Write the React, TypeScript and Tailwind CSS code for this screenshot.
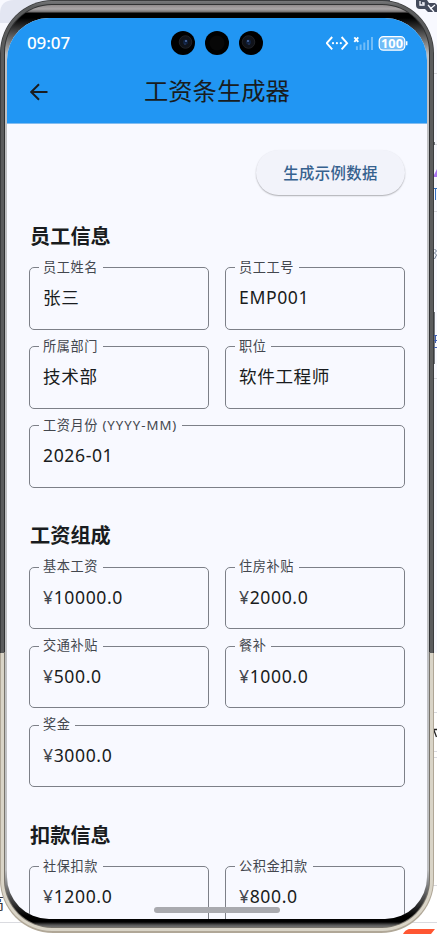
import React from "react";

function Field({ label, value }: { label: string; value: string }) {
  const money = value.startsWith("¥");
  const [name, hint] = label.split(" ");
  return (
    <fieldset className="-mt-[9px] h-[71px] min-w-0 flex-1 rounded-[5px] border border-[#7d8088] pl-[13px]">
      <legend className="-ml-[4px] h-[18px] whitespace-nowrap pl-[4px] pr-[5px] text-[13.2px] leading-[17px] tracking-[0.55px] text-[#43474e]">
        {name}
        {hint && <span className="tracking-[1px]"> {hint}</span>}
      </legend>
      <div className="pt-[8.5px] text-[17.6px] leading-[24px] tracking-[0.6px] text-[#191c20]">
        {money && <span className="text-[#43474e]">¥</span>}
        {money ? value.slice(1) : value}
      </div>
    </fieldset>
  );
}

function Section({ title, rows }: { title: string; rows: [string, string][][] }) {
  return (
    <section>
      <h2 className="mb-[17.3px] h-[30px] pl-px text-[20.2px] font-bold leading-[31px] text-[#191c20]">{title}</h2>
      <div className="flex flex-col gap-[17px]">
        {rows.map((row, i) => (
          <div key={i} className="flex gap-4">
            {row.map(([label, value]) => (
              <Field key={label} label={label} value={value} />
            ))}
          </div>
        ))}
      </div>
    </section>
  );
}

function Camera({ lens, flip }: { lens?: boolean; flip?: boolean }) {
  return (
    <svg width="24" height="24" viewBox="0 0 24 24" className={flip ? "-scale-x-100" : ""}>
      <circle cx="12" cy="12" r="12" fill="#000" />
      {lens ? (
        <>
          <circle cx="14.5" cy="11" r="6.3" fill="#10131a" stroke="#24262b" strokeWidth="0.8" />
          <circle cx="14.5" cy="11" r="2.6" fill="#11203c" />
          <circle cx="15" cy="10" r="0.9" fill="#5878b5" />
          <circle cx="14" cy="13" r="0.6" fill="#3d5fa5" />
        </>
      ) : (
        <circle cx="12" cy="12" r="7.5" fill="#070707" />
      )}
    </svg>
  );
}

function StatusBar() {
  return (
    <div className="flex h-[50px] items-center pl-[20px] pr-[19px]">
      <span className="w-[144px] pb-[2px] text-[17px] font-medium leading-none tracking-[-0.1px] text-white">09:07</span>
      <div className="flex w-[93px] gap-[10px]">
        <Camera lens />
        <Camera />
        <Camera lens flip />
      </div>
      <svg className="ml-auto" width="82" height="18" viewBox="0 0 82 18" fill="none">
        <g stroke="#fff" strokeWidth="1.9">
          <path d="M6.2 3 .7 9.2l5.500 6.200M15.600 3l5.500 6.200-5.500 6.200" />
        </g>
        <g fill="#fff">
          <circle cx="7" cy="9.2" r="1.1" />
          <circle cx="10.9" cy="9.2" r="1.1" />
          <circle cx="14.8" cy="9.2" r="1.1" />
        </g>
        <path d="m28.300 3.400 4 4.400m0-4.400-4 4.400" stroke="#fff" strokeWidth="1.9" />
        <path d="M30.900 12.200v3.800M34.600 10.600V16M38.300 8.500V16M42 6V16M46 3v13" stroke="#fff" strokeOpacity=".36" strokeWidth="2" />
        <rect x="53.2" y="2.7" width="25.6" height="13.5" rx="4.2" fill="#fff" fillOpacity=".36" stroke="#fff" strokeWidth="1.2" />
        <path d="M80.700 7.300v4" stroke="#fff" strokeWidth="1.5" />
        <text x="66" y="14.1" fill="#fff" fontSize="12.8" fontWeight="700" textAnchor="middle" fontFamily="Noto Sans, sans-serif">100</text>
      </svg>
    </div>
  );
}

/** Slivers of the desktop window that show round the handset. */
function Backdrop() {
  return (
    <svg className="absolute inset-0" width="437" height="934" viewBox="0 0 437 934" fontFamily="Noto Sans CJK SC, sans-serif">
      <rect width="437" height="934" fill="#fff" />
      <rect width="437" height="653" fill="#f8f9ff" />
      <path d="M0 14Q0 0 14 0h36v23H0z" fill="#e3e6f2" />
      <path d="M50 0h337v3H50z" fill="#9b9da6" />
      <path d="M106 0h20v2h-20zM310 0h24v2h-24zM366 0h24v3h-24z" fill="#444a56" />
      <path d="M172 0h14v2h-14z" fill="#34579c" />
      <path d="M416 0h11l2 3h6l2 2v7h-9l-3-3h-5q-4 0-4-4z" fill="#444b5c" />
      <path d="M420 1v4h4V3h-2m6 2 6 7m1-7-5 4" fill="none" stroke="#f8f9ff" strokeWidth="1.3" />
      <path d="M431 73.500h6M433 144.500h4M433 211.500h4M433 378.500h4M433 712.500h4M433 751.500h4M433 757.500h4M433 885.500h4M0 922.500h437" stroke="#dadbe0" />
      <path d="M437 169v8h-4z" fill="#ac78f2" />
      <path d="M434.500 142v3M434.500 312v52" stroke="#777a80" />
      <path d="M435.500 188v12M434 188.500h3" stroke="#3873c4" fill="none" />
      <path d="M434.500 249l2 2-2 2 2 2-2 4" stroke="#69788e" fill="none" />
      <path d="M434 335.500h3M434 340.500h3M434 347.500h3M435.500 335v8" stroke="#405fae" fill="none" />
      <path d="M434 729.500h3M433.500 729l3 8" stroke="#222" strokeWidth="1.3" fill="none" />
      <path d="M409 929h26l-4 5h-28q2-4 6-5z" fill="#ff5632" />
      <text x="-12" y="909" fontSize="16" fill="#333">高</text>
    </svg>
  );
}

export default function App() {
  return (
    <div className="relative h-[934px] w-[437px] overflow-hidden font-['Noto_Sans','Noto_Sans_CJK_SC',sans-serif]">
      <Backdrop />
      {/* Handset: metal rim, grey bevel, black bezel, display */}
      <div className="relative h-[933px] w-[434px] overflow-hidden rounded-[53px] bg-[linear-gradient(#3b3c3d_0_653px,#b0a797_653px)] pb-[2px] pl-px pr-px pt-px">
        <div className="h-full overflow-hidden rounded-[51px] bg-[linear-gradient(#77787a_0,#5b5c5d_6px_652px,#d9d4c7_652px)] pb-[3px] pl-[3px] pr-[3px] pt-[3px]">
          <div className="h-full overflow-hidden rounded-[48px] bg-[linear-gradient(#303132_0_648px,#77736b_648px)] pb-px pl-px pr-px pt-px">
            <div className="h-full overflow-hidden rounded-[47px] bg-[linear-gradient(#8f8a8b_0,#aaa6a7_4px,#716e6f_7px,#000_8px_13px,#bfc0c2_50px,#bfc0c2_865px,#000_911px_917px,#555_920px,#999_925px)] pb-[8px] pl-[2px] pr-[2px] pt-[13px]">
              <div className="relative flex h-full flex-col overflow-hidden rounded-[42px] bg-[#f8f9ff]">
                <header className="h-[106px] shrink-0 border-b border-[#83bdf0] bg-[#2196f3]">
                  <StatusBar />
                  <div className="flex h-[48px] items-center">
                    <svg className="ml-[21px]" width="20" height="20" viewBox="0 0 20 20" fill="none" stroke="#191c20" strokeWidth="2">
                      <path d="m11 2.200-7.800 7.800 7.800 7.800M3 10h16.500" />
                    </svg>
                    <h1 className="ml-[96px] pb-[2px] text-[24.3px] leading-[36px] text-[#191c20]">工资条生成器</h1>
                  </div>
                </header>
                <main className="flex shrink-0 flex-col px-[22px] pt-[26px]">
                  <button className="mb-[25.6px] h-[45px] w-[149px] self-end rounded-full bg-[#f2f3fa] pt-[2px] text-[15.4px] font-medium tracking-[0.4px] text-[#36618e] shadow-[0_1px_1.5px_rgba(0,0,0,0.3)]">
                    生成示例数据
                  </button>
                  <div className="flex flex-col gap-[32.2px]">
                    <Section
                      title="员工信息"
                      rows={[
                        [["员工姓名", "张三"], ["员工工号", "EMP001"]],
                        [["所属部门", "技术部"], ["职位", "软件工程师"]],
                        [["工资月份 (YYYY-MM)", "2026-01"]],
                      ]}
                    />
                    <Section
                      title="工资组成"
                      rows={[
                        [["基本工资", "¥10000.0"], ["住房补贴", "¥2000.0"]],
                        [["交通补贴", "¥500.0"], ["餐补", "¥1000.0"]],
                        [["奖金", "¥3000.0"]],
                      ]}
                    />
                    <Section title="扣款信息" rows={[[["社保扣款", "¥1200.0"], ["公积金扣款", "¥800.0"]]]} />
                  </div>
                </main>
                <div className="absolute inset-x-0 bottom-[6px] mx-auto h-[6px] w-[126px] rounded-full bg-[#a9aaaf]" />
              </div>
            </div>
          </div>
        </div>
      </div>
    </div>
  );
}
